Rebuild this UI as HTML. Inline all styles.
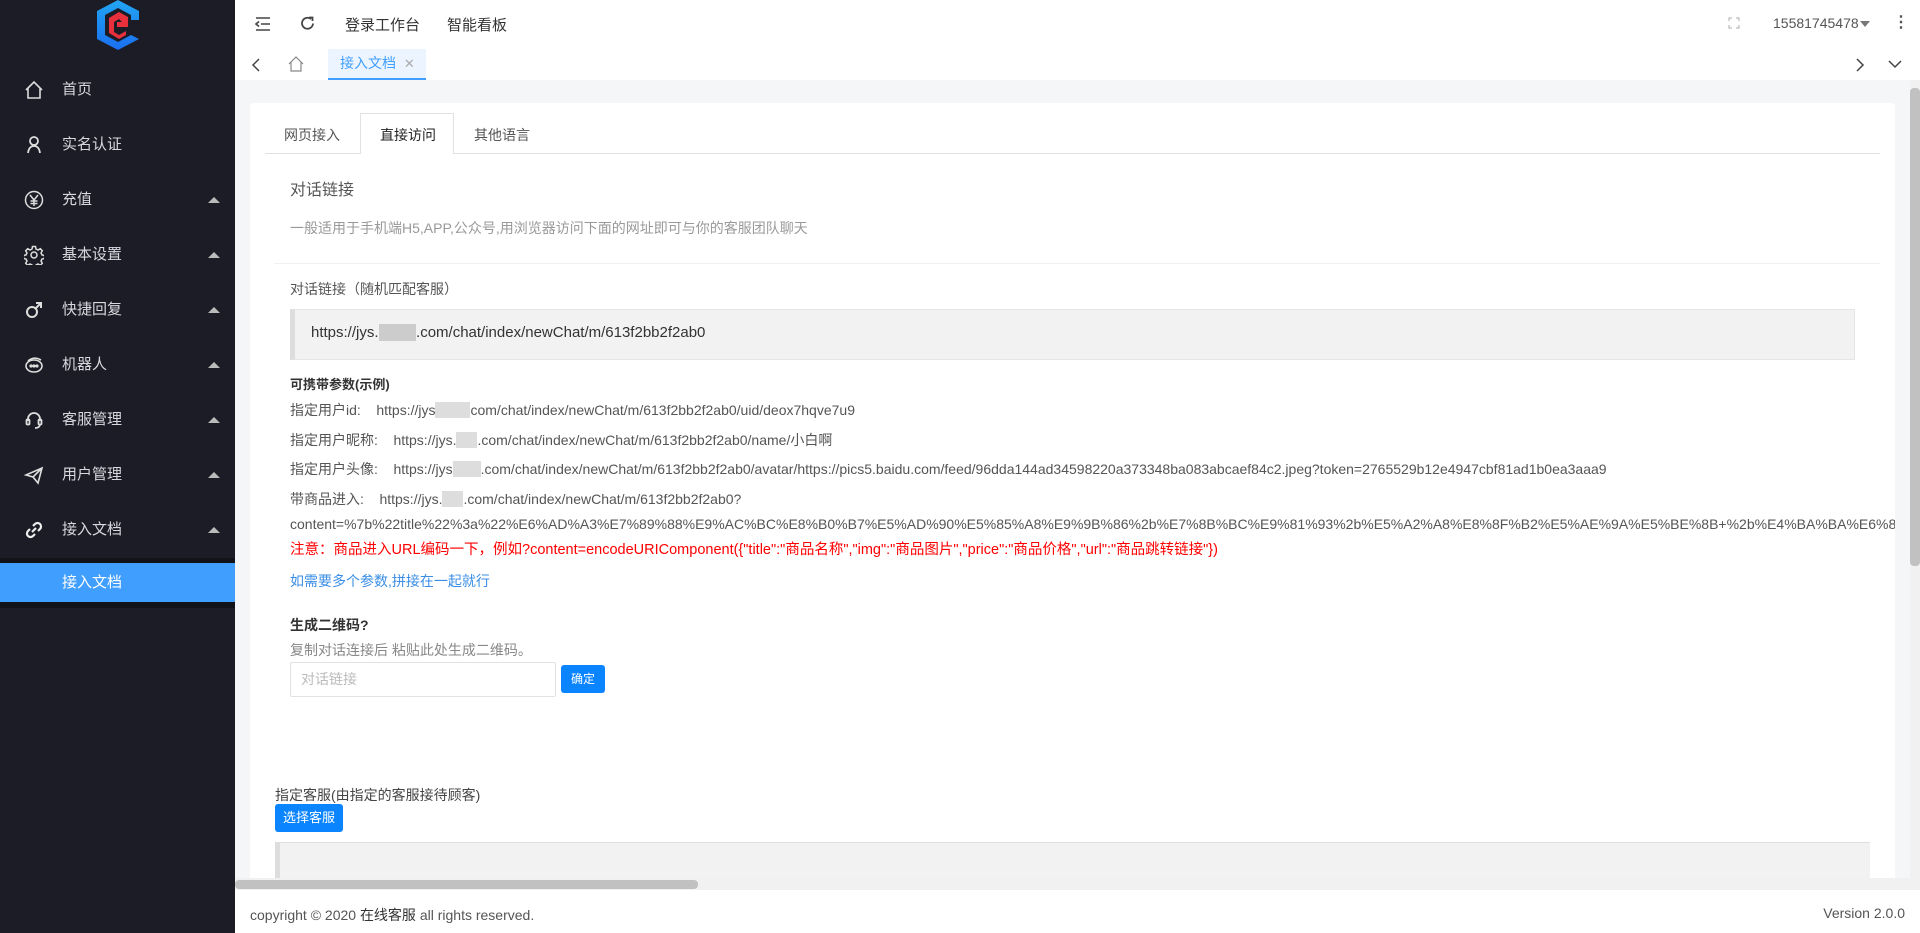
<!DOCTYPE html>
<html><head><meta charset="utf-8"><style>
*{margin:0;padding:0;box-sizing:border-box}
body{width:1920px;height:933px;overflow:hidden;font-family:"Liberation Sans","Noto Sans CJK SC",sans-serif;background:#f5f6f8;position:relative;color:#333}
.abs{position:absolute}
#side{left:0;top:0;width:235px;height:933px;background:#1c1c26}
.mi{position:absolute;left:0;width:235px;height:55px;color:#d8d8de;font-size:15px;line-height:55px}
.mi .t{position:absolute;left:62px}
.mi svg{position:absolute;left:24px;top:18px}
.mi .ar{position:absolute;left:208px;top:25px;width:0;height:0;border-left:6px solid transparent;border-right:6px solid transparent;border-bottom:6px solid #bbb}
#hdr{left:235px;top:0;width:1685px;height:49px;background:#fff;box-shadow:0 1px 3px rgba(0,0,0,.06);font-size:15px;color:#333}
#tabs{left:235px;top:49px;width:1685px;height:31px;background:#fff}
.card{left:250px;top:103px;width:1645px;height:790px;background:#fff;border-radius:3px;overflow:hidden}
.txt{position:absolute;white-space:nowrap}
</style></head><body>
<div id="side" class="abs">
 <svg class="abs" style="left:95px;top:0" width="46" height="50" viewBox="0 0 46 50">
  <defs><linearGradient id="g" x1="0" y1="0" x2="0" y2="1"><stop offset="0" stop-color="#22a6f2"/><stop offset="1" stop-color="#1a6ff0"/></linearGradient></defs>
  <path d="M23 0 L44 11 L44 20 L36 20 L36 15 L23 8 L10 15 L10 35 L23 42 L36 35 L44 39 L23 50 L2 39 L2 11 Z" fill="url(#g)"/>
  <path d="M14 18 L24 12 L33 17 L33 27 L22 27 L22 22 L27 22 L24 19 L19 22 L19 32 L24 35 L31 31 L31 35 L24 39 L14 33 Z" fill="#e8303c"/>
 </svg>
 <div class="mi" style="top:62px"><svg width="20" height="20" viewBox="0 0 20 20" fill="none" stroke="#ddd" stroke-width="1.6"><path d="M2 10 L10 2 L18 10 M4 8 V18 H16 V8"/></svg><span class="t">首页</span></div>
 <div class="mi" style="top:117px"><svg width="20" height="20" viewBox="0 0 20 20" fill="none" stroke="#ddd" stroke-width="1.8"><circle cx="10" cy="6" r="4"/><path d="M4 18 Q5 11 10 11 Q15 11 16 18"/></svg><span class="t">实名认证</span></div>
 <div class="mi" style="top:172px"><svg width="20" height="20" viewBox="0 0 20 20" fill="none" stroke="#ddd" stroke-width="1.5"><circle cx="10" cy="10" r="8.5"/><path d="M6 5 L10 10 L14 5 M10 10 V16 M6.5 11 H13.5 M6.5 13.5 H13.5"/></svg><span class="t">充值</span><i class="ar"></i></div>
 <div class="mi" style="top:227px"><svg width="20" height="20" viewBox="0 0 20 20" fill="none" stroke="#ddd" stroke-width="1.5"><circle cx="10" cy="10" r="3"/><path d="M8.5 1.5h3l.5 2.5 2 1 2.3-1.3 2 2-1.3 2.3 1 2 2.5.5v3l-2.5.5-1 2 1.3 2.3-2 2-2.3-1.3-2 1-.5 2.5h-3l-.5-2.5-2-1-2.3 1.3-2-2 1.3-2.3-1-2-2.5-.5v-3l2.5-.5 1-2-1.3-2.3 2-2 2.3 1.3 2-1z"/></svg><span class="t">基本设置</span><i class="ar"></i></div>
 <div class="mi" style="top:282px"><svg width="20" height="20" viewBox="0 0 20 20" fill="none" stroke="#ddd" stroke-width="2"><circle cx="8" cy="12" r="5"/><path d="M11.5 8.5 L17 3 M12 3 H17 V8"/></svg><span class="t">快捷回复</span><i class="ar"></i></div>
 <div class="mi" style="top:337px"><svg width="20" height="20" viewBox="0 0 20 20" fill="none" stroke="#ddd" stroke-width="1.6"><ellipse cx="10" cy="11" rx="8" ry="6"/><path d="M4 6 Q10 1 17 5"/><circle cx="7" cy="11" r=".8" fill="#ddd"/><circle cx="10" cy="11" r=".8" fill="#ddd"/><circle cx="13" cy="11" r=".8" fill="#ddd"/></svg><span class="t">机器人</span><i class="ar"></i></div>
 <div class="mi" style="top:392px"><svg width="20" height="20" viewBox="0 0 20 20" fill="none" stroke="#ddd" stroke-width="1.8"><path d="M4 11 V9 A6 6 0 0 1 16 9 V11"/><rect x="2.5" y="9.5" width="3" height="5" rx="1"/><rect x="14.5" y="9.5" width="3" height="5" rx="1"/><path d="M16 15 Q15 18 11 18"/></svg><span class="t">客服管理</span><i class="ar"></i></div>
 <div class="mi" style="top:447px"><svg width="20" height="20" viewBox="0 0 20 20" fill="none" stroke="#ddd" stroke-width="1.6"><path d="M2 10 L18 3 L14 18 L9 12 Z M9 12 L18 3"/></svg><span class="t">用户管理</span><i class="ar"></i></div>
 <div class="mi" style="top:502px"><svg width="20" height="20" viewBox="0 0 20 20" fill="none" stroke="#eee" stroke-width="2.2"><path d="M8 12 L12 8"/><path d="M9 6 L11 4 A3 3 0 0 1 16 9 L14 11"/><path d="M11 14 L9 16 A3 3 0 0 1 4 11 L6 9"/></svg><span class="t">接入文档</span><i class="ar"></i></div>
 <div class="abs" style="left:0;top:558px;width:235px;height:50px;background:#121219"></div>
 <div class="abs" style="left:0;top:563px;width:235px;height:39px;background:#409eff;color:#fff;font-size:15px;line-height:39px;padding-left:62px">接入文档</div>
</div>
<div id="hdr" class="abs">
 <svg class="abs" style="left:20px;top:16px" width="16" height="16" viewBox="0 0 16 16" stroke="#444" stroke-width="1.6" fill="none"><path d="M1 2H15M6 8H15M1 14H15M4 5.5L1 8 4 10.5"/></svg>
 <svg class="abs" style="left:64px;top:15px" width="17" height="17" viewBox="0 0 17 17" stroke="#444" stroke-width="1.8" fill="none"><path d="M14 8.5A5.5 5.5 0 1 1 12 4"/><path d="M10 2.5H13.5V6" /></svg>
 <span class="txt" style="left:110px;top:14px">登录工作台</span>
 <span class="txt" style="left:212px;top:14px">智能看板</span>
 <svg class="abs" style="left:1493px;top:17px" width="12" height="12" viewBox="0 0 12 12" stroke="#aaa" stroke-width="1" fill="none"><path d="M1 4V1H4M8 1H11V4M11 8V11H8M4 11H1V8"/></svg>
 <span class="txt" style="left:1538px;top:15px;font-size:14px;color:#555">15581745478</span>
 <span class="abs" style="left:1625px;top:21px;border-left:5px solid transparent;border-right:5px solid transparent;border-top:6px solid #777"></span>
 <span class="txt" style="left:1658px;top:12px;font-size:16px;color:#555;font-weight:bold">⋮</span>
</div>
<div id="tabs" class="abs">
 <svg class="abs" style="left:16px;top:9px" width="10" height="14" viewBox="0 0 10 14" stroke="#444" stroke-width="1.5" fill="none"><path d="M8 1L2 7 8 13"/></svg>
 <svg class="abs" style="left:53px;top:7px" width="16" height="16" viewBox="0 0 16 16" stroke="#888" stroke-width="1.2" fill="none"><path d="M1 8L8 1 15 8M3 6V15H13V6"/></svg>
 <div class="abs" style="left:93px;top:0;width:98px;height:31px;background:#ecf5ff;border-bottom:2px solid #409eff;color:#409eff;font-size:14px;line-height:29px;padding-left:12px">接入文档 <span style="color:#aaa;font-size:13px;margin-left:4px">✕</span></div>
 <svg class="abs" style="left:1620px;top:9px" width="10" height="14" viewBox="0 0 10 14" stroke="#444" stroke-width="1.5" fill="none"><path d="M2 1L8 7 2 13"/></svg>
 <svg class="abs" style="left:1653px;top:10px" width="14" height="10" viewBox="0 0 14 10" stroke="#444" stroke-width="1.5" fill="none"><path d="M1 2L7 8 13 2"/></svg>
</div>
<div class="abs" style="left:1910px;top:80px;width:10px;height:810px;background:#f1f1f1"></div>
<div class="abs" style="left:1910px;top:88px;width:10px;height:478px;background:#c1c1c1;border-radius:4px"></div>
<div class="card abs">
 <div class="abs" style="left:15px;top:50px;width:1615px;height:1px;background:#e2e2e2"></div>
 <div class="abs" style="left:110px;top:10px;width:94px;height:41px;background:#fff;border:1px solid #e2e2e2;border-bottom:none"></div>
 <span class="txt" style="left:34px;top:22px;font-size:14px;color:#555">网页接入</span>
 <span class="txt" style="left:130px;top:22px;font-size:14px;color:#222">直接访问</span>
 <span class="txt" style="left:224px;top:22px;font-size:14px;color:#555">其他语言</span>
 <span class="txt" style="left:40px;top:73px;font-size:16px;color:#555">对话链接</span>
 <span class="txt" style="left:40px;top:115px;font-size:14px;color:#999">一般适用于手机端H5,APP,公众号,用浏览器访问下面的网址即可与你的客服团队聊天</span>
 <div class="abs" style="left:24px;top:160px;width:1606px;height:1px;background:#f0f0f0"></div>
 <span class="txt" style="left:40px;top:176px;font-size:14px;color:#555">对话链接（随机匹配客服）</span>
 <div class="abs" style="left:40px;top:206px;width:1565px;height:51px;background:#f2f2f2;border-left:5px solid #ddd;border-top:1px solid #e6e6e6;border-bottom:1px solid #e6e6e6;border-right:1px solid #e6e6e6"></div>
 <span class="txt" style="left:61px;top:221px;font-size:15px;color:#333">https://jys.<span style="background:#ccc;color:transparent">xxxxx</span>.com/chat/index/newChat/m/613f2bb2f2ab0</span>
 <span class="txt" style="left:40px;top:271px;font-size:13px;color:#333;font-weight:bold">可携带参数(示例)</span>
 <div class="txt" style="left:40px;top:293px;font-size:14px;color:#555;line-height:29.5px">
  指定用户id: &nbsp;&nbsp;&nbsp;https://jys<span style="background:#ddd;color:transparent">xxxxx</span>com/chat/index/newChat/m/613f2bb2f2ab0/uid/deox7hqve7u9<br>
  指定用户昵称: &nbsp;&nbsp;&nbsp;https://jys.<span style="background:#ddd;color:transparent">xxx</span>.com/chat/index/newChat/m/613f2bb2f2ab0/name/小白啊<br>
  指定用户头像: &nbsp;&nbsp;&nbsp;https://jys<span style="background:#ddd;color:transparent">xxxx</span>.com/chat/index/newChat/m/613f2bb2f2ab0/avatar/https://pics5.baidu.com/feed/96dda144ad34598220a373348ba083abcaef84c2.jpeg?token=2765529b12e4947cbf81ad1b0ea3aaa9<br>
  带商品进入: &nbsp;&nbsp;&nbsp;https://jys.<span style="background:#ddd;color:transparent">xxx</span>.com/chat/index/newChat/m/613f2bb2f2ab0?
 </div>
 <span class="txt" style="left:40px;top:413px;font-size:14px;color:#555">content=%7b%22title%22%3a%22%E6%AD%A3%E7%89%88%E9%AC%BC%E8%B0%B7%E5%AD%90%E5%85%A8%E9%9B%86%2b%E7%8B%BC%E9%81%93%2b%E5%A2%A8%E8%8F%B2%E5%AE%9A%E5%BE%8B+%2b%E4%BA%BA%E6%80%A7%E5%BC%B1%E7%82%B9</span>
 <span class="txt" style="left:40px;top:435px;font-size:14.5px;color:#f00">注意：商品进入URL编码一下，例如?content=encodeURIComponent({"title":"商品名称","img":"商品图片","price":"商品价格","url":"商品跳转链接"})</span>
 <span class="txt" style="left:40px;top:468px;font-size:14px;color:#3a8ee6">如需要多个参数,拼接在一起就行</span>
 <span class="txt" style="left:40px;top:512px;font-size:14px;color:#333;font-weight:bold">生成二维码?</span>
 <span class="txt" style="left:40px;top:537px;font-size:14px;color:#888">复制对话连接后 粘贴此处生成二维码。</span>
 <div class="abs" style="left:40px;top:559px;width:266px;height:35px;border:1px solid #e2e2e2;border-radius:2px;font-size:14px;color:#bbb;line-height:33px;padding-left:10px">对话链接</div>
 <div class="abs" style="left:311px;top:562px;width:44px;height:28px;background:#0a84ff;border-radius:3px;color:#fff;font-size:12px;line-height:28px;text-align:center">确定</div>
 <span class="txt" style="left:25px;top:682px;font-size:14px;color:#444">指定客服(由指定的客服接待顾客)</span>
 <div class="abs" style="left:25px;top:701px;width:68px;height:28px;background:#0a84ff;border-radius:3px;color:#fff;font-size:13px;line-height:28px;text-align:center">选择客服</div>
 <div class="abs" style="left:25px;top:739px;width:1595px;height:60px;background:#f2f2f2;border-left:5px solid #ddd;border-top:1px solid #e0e0e0"></div>
</div>
<div class="abs" style="left:235px;top:878px;width:1675px;height:12px;background:#f1f1f1"></div>
<div class="abs" style="left:235px;top:880px;width:463px;height:9px;background:#c1c1c1;border-radius:4px"></div>
<div class="abs" style="left:235px;top:890px;width:1685px;height:43px;background:#fff"></div>
<span class="txt" style="left:250px;top:905px;font-size:14px;color:#555">copyright © 2020 <span style="color:#333">在线客服</span> all rights reserved.</span>
<span class="txt" style="right:15px;top:905px;font-size:14px;color:#555">Version 2.0.0</span>
</body></html>
